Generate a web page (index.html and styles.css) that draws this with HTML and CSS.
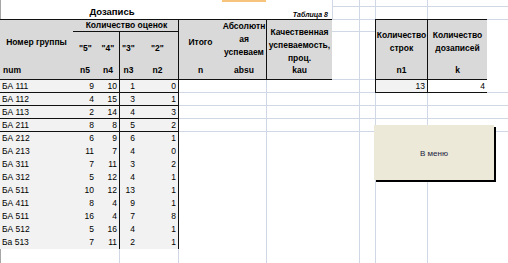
FILE: index.html
```html
<!DOCTYPE html>
<html lang="ru">
<head>
<meta charset="utf-8">
<title>Дозапись</title>
<link rel="stylesheet" href="styles.css">
</head>
<body>
<div class="sheet">
  <div class="gl gl-v0"></div>
  <div class="gl gl-r1"></div>
  <div class="gl gl-r2"></div>
  <div class="gl gl-r3"></div>
  <div class="gl gl-r4"></div>
  <div class="gl gl-v332"></div>
  <div class="gl gl-v359"></div>
  <div class="gl gl-v375"></div>
  <div class="gl gl-v427"></div>
  <div class="gl gl-v266"></div>
  <div class="gl gl-v119"></div>
  <div class="gl gl-v178"></div>
  <div class="gl-rows"><div></div><div></div><div></div><div></div></div>
  <div class="colsel"></div>

  <div class="title">Дозапись</div>
  <div class="caption">Таблица 8</div>

  <div class="head">
    <div class="h-num">Номер группы</div>
    <div class="h-q">Количество оценок</div>
    <div class="h-m c2">"5"</div>
    <div class="h-m c3">"4"</div>
    <div class="h-m c4 bl">"3"</div>
    <div class="h-m c5 br">"2"</div>
    <div class="h-itogo">Итого</div>
    <div class="h-absu">Абсолютн<br>ая<br>успеваем</div>
    <div class="h-kau">Качественная<br>успеваемость,<br>проц.</div>
    <div class="lab l-num">num</div>
    <div class="lab">n5</div>
    <div class="lab">n4</div>
    <div class="lab bl">n3</div>
    <div class="lab br">n2</div>
    <div class="lab">n</div>
    <div class="lab">absu</div>
    <div class="lab bl">kau</div>
  </div>

  <div class="data">
    <div class="row rb"><span class="grp">БА 111</span><span>9</span><span>10</span><span class="bl">1</span><span class="br">0</span></div>
    <div class="row rb"><span class="grp">БА 112</span><span>4</span><span>15</span><span class="bl">3</span><span class="br">1</span></div>
    <div class="row rb"><span class="grp">БА 113</span><span>2</span><span>14</span><span class="bl">4</span><span class="br">3</span></div>
    <div class="row rb"><span class="grp">БА 211</span><span>8</span><span>8</span><span class="bl">5</span><span class="br">2</span></div>
    <div class="row"><span class="grp">БА 212</span><span>6</span><span>9</span><span class="bl">6</span><span class="br">1</span></div>
    <div class="row"><span class="grp">БА 213</span><span>11</span><span>7</span><span class="bl">4</span><span class="br">0</span></div>
    <div class="row"><span class="grp">БА 311</span><span>7</span><span>11</span><span class="bl">3</span><span class="br">2</span></div>
    <div class="row"><span class="grp">БА 312</span><span>5</span><span>12</span><span class="bl">4</span><span class="br">1</span></div>
    <div class="row"><span class="grp">БА 511</span><span>10</span><span>12</span><span class="bl">13</span><span class="br">1</span></div>
    <div class="row"><span class="grp">БА 411</span><span>8</span><span>4</span><span class="bl">9</span><span class="br">1</span></div>
    <div class="row"><span class="grp">БА 511</span><span>16</span><span>4</span><span class="bl">7</span><span class="br">8</span></div>
    <div class="row"><span class="grp">БА 512</span><span>5</span><span>16</span><span class="bl">4</span><span class="br">1</span></div>
    <div class="row"><span class="grp">Ба 513</span><span>7</span><span>11</span><span class="bl">2</span><span class="br">1</span></div>
  </div>

  <div class="box">
    <div class="b-h">Количество<br>строк</div>
    <div class="b-h bl">Количество<br>дозаписей</div>
    <div class="b-l">n1</div>
    <div class="b-l bl">k</div>
    <div class="b-d b-gray">13</div>
    <div class="b-d bl">4</div>
  </div>

  <button class="menu-btn" type="button">В меню</button>
</div>
</body>
</html>
```

FILE: styles.css
```css
* { box-sizing: border-box; margin: 0; padding: 0; }
html, body { background: #fff; }
body {
  margin: 0;
  font-family: "Liberation Sans", Arial, sans-serif;
  font-size: 8.5px;
  color: #000;
}
.sheet {
  position: relative;
  width: 508px;
  height: 263px;
  display: grid;
  grid-template-columns: 73px 24px 22px 18px 42px 43px 44px 66px 27px 16px 52px 60px 21px;
  grid-template-rows: 6px 13px 13px 48px 169px 14px;
  overflow: hidden;
}

/* light spreadsheet gridlines */
.gl { border: 0 solid #d0d7e5; }
.gl-v0 { grid-column: 1; grid-row: 1 / -1; border-left: 1px solid #a6a6a6; }
.gl-r1 { grid-column: 9 / 14; grid-row: 2; border-top-width: 1px; }
.gl-r2 { grid-column: 9 / 14; grid-row: 3; border-top-width: 1px; }
.gl-r3 { grid-column: 9 / 11; grid-row: 3; border-bottom-width: 1px; }
.gl-r4 { grid-column: 9 / 11; grid-row: 4; border-bottom-width: 1px; }
.gl-v332 { grid-column: 9; grid-row: 1 / 3; border-left-width: 1px; }
.gl-v359 { grid-column: 10; grid-row: 1 / -1; border-left-width: 1px; }
.gl-v375 { grid-column: 11; grid-row: 1 / -1; border-left-width: 1px; }
.gl-v427 { grid-column: 12; grid-row: 1 / -1; border-left-width: 1px; }
.gl-v266 { grid-column: 8; grid-row: 5 / -1; border-left-width: 1px; }
.gl-v119 { grid-column: 4; grid-row: 6; border-left-width: 1px; }
.gl-v178 { grid-column: 5; grid-row: 6; border-right-width: 1px; }
.gl-rows { grid-column: 6 / 14; grid-row: 5; display: flex; flex-direction: column; }
.gl-rows div { height: 13px; border-bottom: 1px solid #d0d7e5; }
.colsel { grid-column: 7; grid-row: 1; border-top: 2px solid #f6c47c; }

.title {
  grid-column: 1 / 7;
  grid-row: 1 / 3;
  text-align: center;
  font-weight: bold;
  font-size: 9.5px;
  line-height: 13px;
  padding-top: 5px;
  padding-left: 2px;
}
.caption {
  grid-column: 8;
  grid-row: 2 / 4;
  text-align: right;
  font-weight: bold;
  font-style: italic;
  font-size: 7px;
  line-height: 11px;
  padding: 3px 4px 0 0;
}

/* header */
.head {
  grid-column: 1 / 9;
  grid-row: 3 / 5;
  background: #d9d9d9;
  border-top: 1px solid #111;
  border-bottom: 1px solid #111;
  display: grid;
  grid-template-columns: 73px 24px 22px 18px 42px 43px 44px 66px;
  grid-template-rows: 12px 30px 17px;
  font-weight: bold;
  line-height: 13px;
}
.head > div { display: flex; align-items: center; justify-content: center; text-align: center; }
.h-num { grid-column: 1; grid-row: 1 / 3; padding-top: 2px; }
.h-q { grid-column: 2 / 6; grid-row: 1; border-bottom: 1px solid #111; border-right: 1px solid #111; padding-left: 2px; }
.h-m { grid-row: 2; padding-top: 2px; }
.c2 { grid-column: 2; padding-left: 1px; }
.c3 { grid-column: 3; }
.c4 { grid-column: 4; }
.c5 { grid-column: 5; }
.h-itogo { grid-column: 6; grid-row: 1 / 3; padding-top: 2px; }
.head > .h-absu { grid-column: 7; grid-row: 1 / 3; align-items: flex-start; overflow: hidden; white-space: nowrap; padding-top: 0; }
.head > .h-kau { grid-column: 8; grid-row: 1 / 3; border-left: 1px solid #111; align-items: flex-start; padding-top: 6px; white-space: nowrap; }
.lab { grid-row: 3; }
.head > .l-num { justify-content: flex-start; padding-left: 3px; }
.bl { border-left: 1px solid #111; }
.br { border-right: 1px solid #111; }

/* data rows */
.data {
  grid-column: 1 / 6;
  grid-row: 5;
  background: #f2f2f2;
  display: flex;
  flex-direction: column;
}
.row {
  height: 13px;
  display: grid;
  grid-template-columns: 73px 24px 22px 18px 42px;
  line-height: 12px;
}
.rb { border-bottom: 1px solid #111; }
.row span { text-align: right; padding-right: 2px; white-space: nowrap; }
.row span:nth-child(2) { padding-right: 3px; }
.row .grp { text-align: left; padding-left: 2px; }

/* right box */
.box {
  grid-column: 11 / 13;
  grid-row: 3 / 6;
  align-self: start;
  display: grid;
  grid-template-columns: 51px 60px;
  grid-template-rows: 42px 18px 13px;
  border-top: 1px solid #111;
  border-left: 1px solid #111;
  line-height: 13px;
}
.b-h, .b-l { background: #d9d9d9; font-weight: bold; display: flex; align-items: center; justify-content: center; text-align: center; }
.b-h { padding-top: 1px; }
.b-l { border-bottom: 1px solid #111; }
.b-d { background: #fff; border-bottom: 1px solid #111; text-align: right; padding-right: 2px; line-height: 12px; }
.b-gray { background: #f2f2f2; }

/* form button */
.menu-btn {
  position: absolute;
  left: 374px;
  top: 125px;
  width: 120px;
  height: 55px;
  background: #ece9d8;
  border: none;
  box-shadow: 2px 2px 0 #000;
  font-family: "Liberation Sans", Arial, sans-serif;
  font-size: 8px;
  color: #1b1b40;
  padding-top: 1px;
}
```
